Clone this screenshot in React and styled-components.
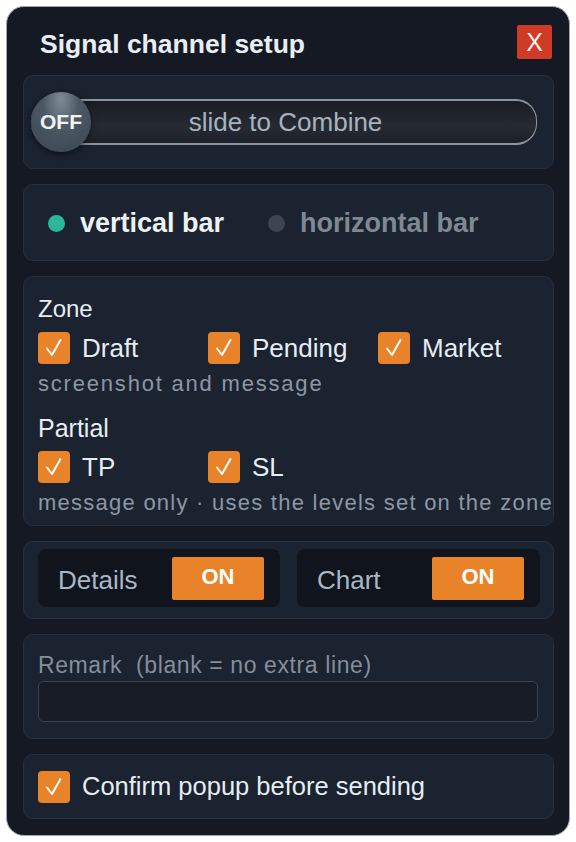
import React, { useState } from 'react';
import styled, { createGlobalStyle } from 'styled-components';

const GlobalStyle = createGlobalStyle`
  body {
    margin: 0;
    background: #ffffff;
    font-family: 'Liberation Sans', Arial, sans-serif;
  }
`;

const Panel = styled.div`
  box-sizing: border-box;
  width: 564px;
  height: 830px;
  margin: 6px;
  padding: 18px 15px 16px 16px;
  background: #141923;
  border: 1px solid #9ea4aa;
  border-radius: 18px;
  display: flex;
  flex-direction: column;
  gap: 15px;
`;

const Header = styled.div`
  display: flex;
  align-items: center;
  justify-content: space-between;
  height: 34px;
  padding: 0 2px 0 17px;
  margin-bottom: 1px;
`;

const Title = styled.h1`
  margin: 0;
  margin-top: 4px;
  font-size: 26.5px;
  font-weight: bold;
  color: #e8eef4;
`;

const CloseButton = styled.button`
  width: 35px;
  height: 34px;
  border: none;
  border-radius: 2px;
  background: #cf3b27;
  color: #f6f0ee;
  font-family: 'Liberation Sans', Arial, sans-serif;
  font-size: 25px;
  padding: 0;
  cursor: pointer;
`;

const Card = styled.div`
  box-sizing: border-box;
  height: ${(p) => p.$h}px;
  background: #1b2230;
  border: 1px solid #273040;
  border-radius: 10px;
  padding: ${(p) => p.$pad || '0 14px'};
  display: flex;
  flex-direction: column;
  justify-content: ${(p) => p.$justify || 'center'};
`;

const SlideTrack = styled.div`
  position: relative;
  height: 42px;
  margin: 0 16px 0 7px;
  border-radius: 21px;
  background: linear-gradient(#191c24, #262a33 60%, #1c2029);
  border-top: 2px solid #8d949b;
  border-bottom: 2px solid #8d949b;
  border-right: 1px solid #8d949b;
  display: flex;
  align-items: center;
  justify-content: center;
`;

const SlideText = styled.span`
  font-size: 26px;
  color: #a7b3bd;
  padding-left: 4px;
`;

const Knob = styled.div`
  position: absolute;
  left: 0;
  top: 50%;
  transform: translateY(-50%);
  width: 60px;
  height: 60px;
  border-radius: 50%;
  background: radial-gradient(ellipse 30% 45% at 50% 12%, #7e8b97 0%, rgba(90, 103, 116, 0) 100%),
    radial-gradient(circle at 50% 30%, #56636f 0%, #44505c 60%, #3a4550 100%);
  box-shadow: 0 2px 6px rgba(0, 0, 0, 0.5);
  display: flex;
  align-items: center;
  justify-content: center;
  color: #f2f2ee;
  font-size: 21px;
  font-weight: bold;
`;

const RadioRow = styled.div`
  display: flex;
  align-items: center;
  gap: 44px;
`;

const RadioItem = styled.label`
  display: flex;
  align-items: center;
  gap: 15px;
  font-size: 27px;
  font-weight: bold;
  color: ${(p) => (p.$active ? '#eef2f6' : '#7f8994')};
  cursor: pointer;
`;

const Dot = styled.span`
  width: 17px;
  height: 17px;
  border-radius: 50%;
  background: ${(p) => (p.$active ? '#2bb89a' : '#3d4553')};
`;

const GroupTitle = styled.div`
  font-size: ${(p) => p.$size || 24}px;
  color: #e6edf3;
  line-height: 28px;
  margin-top: ${(p) => p.$mt || 0}px;
`;

const CheckGrid = styled.div`
  display: grid;
  grid-template-columns: repeat(3, 170px);
  margin-top: 9px;
`;

const CheckItem = styled.label`
  display: flex;
  align-items: center;
  gap: 12px;
  font-size: ${(p) => p.$size || 26}px;
  color: #e6edf3;
  cursor: pointer;
`;

const Box = styled.span`
  box-sizing: border-box;
  width: 32px;
  height: 32px;
  border-radius: 4px;
  background: #e8832a;
  display: flex;
  align-items: center;
  justify-content: center;
  flex-shrink: 0;
`;

const Hint = styled.div`
  font-size: 22px;
  color: #8c98a4;
  letter-spacing: ${(p) => p.$ls || 1.25}px;
  line-height: 24px;
  margin-top: 8px;
  white-space: nowrap;
`;

const ToggleRow = styled.div`
  display: grid;
  grid-template-columns: 242px 243px;
  gap: 17px;
`;

const ToggleBox = styled.div`
  height: 58px;
  box-sizing: border-box;
  background: #10141c;
  border-radius: 8px;
  display: flex;
  align-items: center;
  justify-content: space-between;
  padding: 0 16px 0 20px;
`;

const ToggleLabel = styled.span`
  font-size: 26px;
  color: #a9b8c6;
  margin-top: 4px;
`;

const OnButton = styled.button`
  width: 92px;
  height: 43px;
  border: none;
  border-radius: 2px;
  background: #e8832a;
  color: #ffffff;
  font-family: 'Liberation Sans', Arial, sans-serif;
  font-size: 22px;
  font-weight: bold;
  padding: 0 0 2px;
  cursor: pointer;
`;

const FieldLabel = styled.div`
  font-size: 23px;
  letter-spacing: 0.6px;
  color: #838f9b;
  line-height: 26px;
`;

const TextInput = styled.input`
  box-sizing: border-box;
  width: 500px;
  height: 41px;
  margin-top: 3px;
  background: #171c26;
  border: 1px solid #3a4350;
  border-radius: 6px;
  color: #e6edf3;
  font-size: 18px;
  padding: 0 10px;
  outline: none;
`;

function Check() {
  return (
    <Box>
      <svg width="22" height="22" viewBox="0 0 22 22">
        <path d="M4 11.5 L9 18 L17.5 3" fill="none" stroke="#ffffff" strokeWidth="2" strokeLinecap="round" strokeLinejoin="round" />
      </svg>
    </Box>
  );
}

export default function App() {
  const [mode, setMode] = useState('vertical');

  return (
    <>
      <GlobalStyle />
      <Panel>
        <Header>
          <Title>Signal channel setup</Title>
          <CloseButton>X</CloseButton>
        </Header>

        <Card $h={94} $pad="0">
          <SlideTrack>
            <Knob>OFF</Knob>
            <SlideText>slide to Combine</SlideText>
          </SlideTrack>
        </Card>

        <Card $h={77} $pad="2px 14px 0 24px">
          <RadioRow>
            <RadioItem $active={mode === 'vertical'} onClick={() => setMode('vertical')}>
              <Dot $active={mode === 'vertical'} />
              vertical bar
            </RadioItem>
            <RadioItem $active={mode === 'horizontal'} onClick={() => setMode('horizontal')}>
              <Dot $active={mode === 'horizontal'} />
              horizontal bar
            </RadioItem>
          </RadioRow>
        </Card>

        <Card $h={250} $pad="18px 0 0 14px" $justify="flex-start">
          <GroupTitle>Zone</GroupTitle>
          <CheckGrid>
            <CheckItem><Check />Draft</CheckItem>
            <CheckItem><Check />Pending</CheckItem>
            <CheckItem><Check />Market</CheckItem>
          </CheckGrid>
          <Hint $ls={1.8}>screenshot and message</Hint>
          <GroupTitle $size={25} $mt={18}>Partial</GroupTitle>
          <CheckGrid>
            <CheckItem><Check />TP</CheckItem>
            <CheckItem><Check />SL</CheckItem>
          </CheckGrid>
          <Hint>message only · uses the levels set on the zone</Hint>
        </Card>

        <Card $h={78} $pad="7px 14px 12px 14px" $justify="flex-start">
          <ToggleRow>
            <ToggleBox>
              <ToggleLabel>Details</ToggleLabel>
              <OnButton>ON</OnButton>
            </ToggleBox>
            <ToggleBox>
              <ToggleLabel>Chart</ToggleLabel>
              <OnButton>ON</OnButton>
            </ToggleBox>
          </ToggleRow>
        </Card>

        <Card $h={105} $pad="17px 14px 0 14px" $justify="flex-start">
          <FieldLabel>Remark&nbsp; (blank = no extra line)</FieldLabel>
          <TextInput />
        </Card>

        <Card $h={65}>
          <CheckItem $size={25.5}><Check />Confirm popup before sending</CheckItem>
        </Card>
      </Panel>
    </>
  );
}
